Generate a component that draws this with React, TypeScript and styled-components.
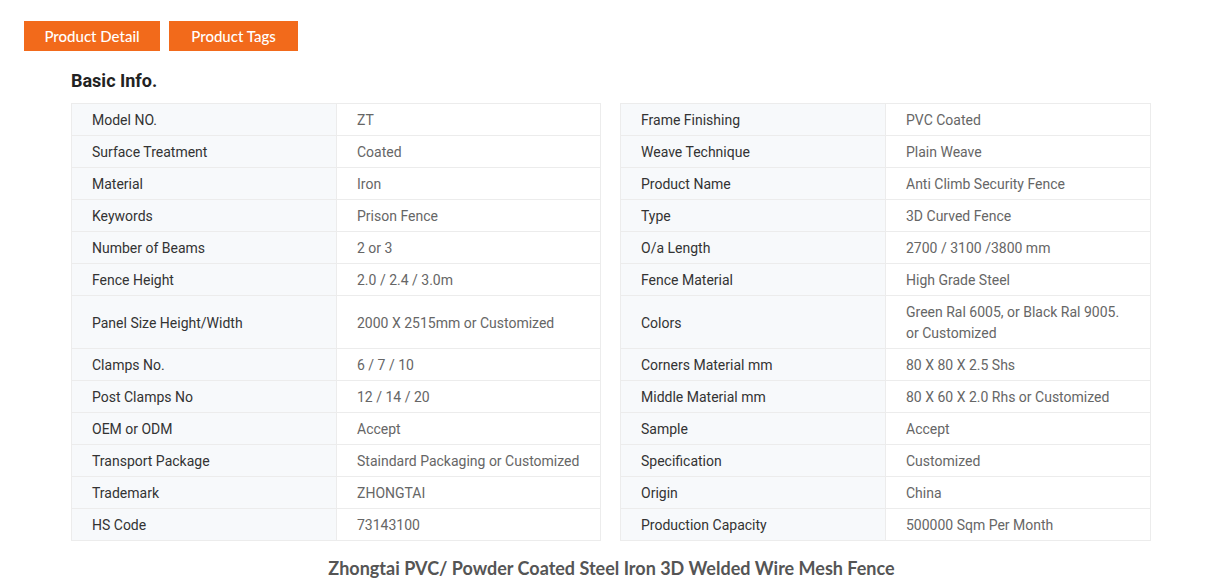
import React from "react";
import styled, { createGlobalStyle } from "styled-components";

const Global = createGlobalStyle`
  html, body { margin: 0; padding: 0; background: #fff; }
  body { font-family: Roboto, "Liberation Sans", sans-serif; }
`;

const Page = styled.div`
  width: 1223px;
  padding: 21px 0 0 24px;
  box-sizing: border-box;
`;

const Tabs = styled.div`
  display: flex;
  gap: 9px;
`;

const TabButton = styled.div<{ $w: number }>`
  width: ${(p) => p.$w}px;
  height: 30px;
  background: #f26a1b;
  color: #fff;
  font-family: Lato, "Open Sans", sans-serif;
  font-size: 15px;
  font-weight: 500;
  display: flex;
  align-items: center;
  justify-content: center;
`;

const Content = styled.div`
  padding-left: 47px;
  width: 1080px;
`;

const Heading = styled.h3`
  margin: 19px 0 0 0;
  height: 33px;
  font-family: Roboto, sans-serif;
  font-size: 18px;
  font-weight: 700;
  color: #222;
  line-height: 21px;
`;

const Table = styled.table`
  border-collapse: collapse;
  width: 1079px;
  table-layout: fixed;
  font-size: 14px;
`;

const Cell = styled.td<{ $label?: boolean }>`
  background: ${(p) => (p.$label ? "#f7f9fb" : "#fff")};
  color: ${(p) => (p.$label ? "#333" : "#666")};
  border: 1px solid #ececec;
  padding: 6px 8px 4px 20px;
  line-height: 21px;
  white-space: nowrap;
`;

const Spacer = styled.td`
  border: none;
  padding: 0;
  background: #fff;
`;

const Title = styled.h2`
  margin: 16px 0 0 0;
  text-align: center;
  font-family: Lato, "Open Sans", sans-serif;
  font-size: 18px;
  font-weight: 700;
  color: #555;
  padding-right: 24px;
`;

type Row = [string, React.ReactNode, string, React.ReactNode];

const rows: Row[] = [
  ["Model NO.", "ZT", "Frame Finishing", "PVC Coated"],
  ["Surface Treatment", "Coated", "Weave Technique", "Plain Weave"],
  ["Material", "Iron", "Product Name", "Anti Climb Security Fence"],
  ["Keywords", "Prison Fence", "Type", "3D Curved Fence"],
  ["Number of Beams", "2 or 3", "O/a Length", "2700 / 3100 /3800 mm"],
  ["Fence Height", "2.0 / 2.4 / 3.0m", "Fence Material", "High Grade Steel"],
  [
    "Panel Size Height/Width",
    "2000 X 2515mm or Customized",
    "Colors",
    <>
      Green Ral 6005, or Black Ral 9005.
      <br />
      or Customized
    </>,
  ],
  ["Clamps No.", "6 / 7 / 10", "Corners Material mm", "80 X 80 X 2.5 Shs"],
  ["Post Clamps No", "12 / 14 / 20", "Middle Material mm", "80 X 60 X 2.0 Rhs or Customized"],
  ["OEM or ODM", "Accept", "Sample", "Accept"],
  ["Transport Package", "Staindard Packaging or Customized", "Specification", "Customized"],
  ["Trademark", "ZHONGTAI", "Origin", "China"],
  ["HS Code", "73143100", "Production Capacity", "500000 Sqm Per Month"],
];

export default function App() {
  return (
    <Page>
      <Global />
      <Tabs>
        <TabButton $w={136}>Product Detail</TabButton>
        <TabButton $w={129}>Product Tags</TabButton>
      </Tabs>
      <Content>
        <Heading>Basic Info.</Heading>
        <Table>
          <colgroup>
            <col style={{ width: 265 }} />
            <col style={{ width: 264 }} />
            <col style={{ width: 20 }} />
            <col style={{ width: 265 }} />
            <col style={{ width: 265 }} />
          </colgroup>
          <tbody>
            {rows.map(([a, b, c, d], i) => (
              <tr key={i}>
                <Cell $label>{a}</Cell>
                <Cell>{b}</Cell>
                <Spacer />
                <Cell $label>{c}</Cell>
                <Cell>{d}</Cell>
              </tr>
            ))}
          </tbody>
        </Table>
      </Content>
      <Title>Zhongtai PVC/ Powder Coated Steel Iron 3D Welded Wire Mesh Fence</Title>
    </Page>
  );
}
